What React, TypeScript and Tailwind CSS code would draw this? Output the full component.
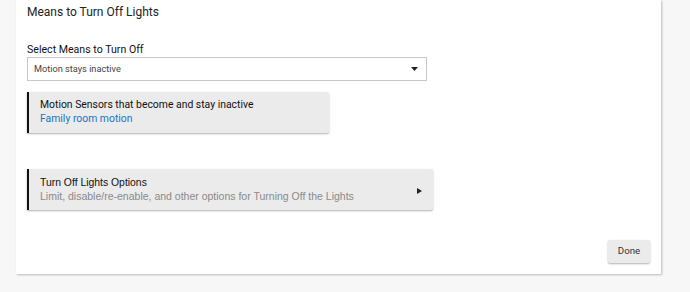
import React from "react";

export default function App() {
  return (
    <div className="w-[690px] h-[292px] bg-[#f7f7f7] overflow-hidden" style={{ fontFamily: "Roboto, 'Liberation Sans', sans-serif" }}>
      <div className="ml-[16px] w-[645px] h-[274px] bg-white shadow-[1px_1px_2px_rgba(0,0,0,0.25)] flex flex-col pl-[11px] pr-[11px]">
        <div className="pt-[3px] text-[12px] leading-[18px] text-[#222]">Means to Turn Off Lights</div>
        <div className="mt-[22px] text-[10.6px] leading-[14px] text-[#111]">Select Means to Turn Off</div>
        <div className="mt-[0px] w-[400px] h-[24px] border border-[#c8c8c8] flex items-center justify-between pl-[6px] pr-[8px]">
          <span className="text-[9.2px] text-[#444]">Motion stays inactive</span>
          <svg width="7" height="4" viewBox="0 0 7 4"><path d="M0 0H7L3.5 4Z" fill="#222" /></svg>
        </div>
        <div className="mt-[11px] w-[302px] h-[41px] bg-[#ebebeb] border-l-2 border-[#111] shadow-[0_1px_2px_rgba(0,0,0,0.3)] rounded-r-[2px] pl-[11px] pt-[6px]">
          <div className="text-[10.4px] leading-[14px] text-[#111]">Motion Sensors that become and stay inactive</div>
          <div className="text-[10.4px] leading-[14px] text-[#1a73c8]">Family room motion</div>
        </div>
        <div className="mt-[36px] w-[406px] h-[41px] bg-[#ebebeb] border-l-2 border-[#111] shadow-[0_1px_2px_rgba(0,0,0,0.3)] rounded-r-[2px] pl-[11px] pr-[11px] pt-[7px] flex justify-between" style={{ fontFamily: "'Liberation Sans', Arial, sans-serif" }}>
          <div>
            <div className="text-[10.4px] leading-[13px] text-[#111]">Turn Off Lights Options</div>
            <div className="text-[10.5px] leading-[14px] text-[#8a8a8a]">Limit, disable/re-enable, and other options for Turning Off the Lights</div>
          </div>
          <svg className="mt-[12px]" width="5" height="6" viewBox="0 0 5 6"><path d="M0 0L5 3L0 6Z" fill="#222" /></svg>
        </div>
        <div className="mt-auto mb-[11px] self-end mr-[0px] w-[42px] h-[23px] bg-[#ebebeb] shadow-[0_1px_2px_rgba(0,0,0,0.3)] rounded-[2px] flex items-center justify-center text-[9.7px] text-[#333]">Done</div>
      </div>
    </div>
  );
}
